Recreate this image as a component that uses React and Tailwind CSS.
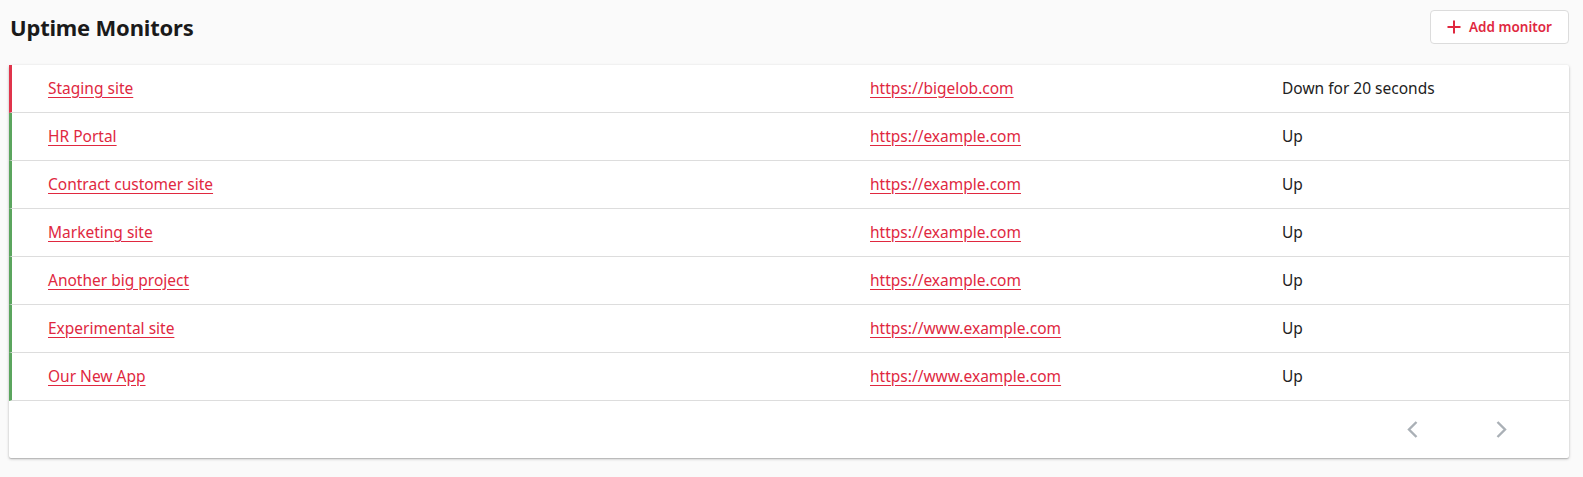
const monitors = [
  { name: "Staging site", url: "https://bigelob.com", status: "Down for 20 seconds", up: false },
  { name: "HR Portal", url: "https://example.com", status: "Up", up: true },
  { name: "Contract customer site", url: "https://example.com", status: "Up", up: true },
  { name: "Marketing site", url: "https://example.com", status: "Up", up: true },
  { name: "Another big project", url: "https://example.com", status: "Up", up: true },
  { name: "Experimental site", url: "https://www.example.com", status: "Up", up: true },
  { name: "Our New App", url: "https://www.example.com", status: "Up", up: true },
];

export default function App() {
  return (
    <div
      className="min-h-[477px] bg-[#fafafa] pl-[9px] pr-[14px] pt-[10px] text-[#1c1c1c]"
      style={{ fontFamily: '"Noto Sans", "Open Sans", sans-serif' }}
    >
      <div className="flex items-center justify-between h-[34px] mb-[21px]">
        <h1 className="pl-[1px] text-[22px] font-bold tracking-[-0.2px] text-[#1a1a1a]">
          Uptime Monitors
        </h1>
        <button className="flex items-center gap-[8px] h-[34px] w-[139px] justify-center rounded-[4px] border border-[#dcdcdc] bg-white text-[13.5px] font-semibold text-[#e0283f]">
          <svg width="14" height="14" viewBox="0 0 14 14" fill="none" stroke="currentColor" strokeWidth="2">
            <path d="M7 0.5v13M0.5 7h13" />
          </svg>
          Add monitor
        </button>
      </div>

      <div className="bg-white rounded-[2px] shadow-[0_1px_3px_rgba(0,0,0,0.25),0_1px_1px_rgba(0,0,0,0.12)]">
        {monitors.map((m) => (
          <div
            key={m.name}
            className={`grid grid-cols-[858px_412px_1fr] items-center h-[48px] border-b border-[#dddddd] border-l-[3px] ${
              m.up ? "border-l-[#5ba55e]" : "border-l-[#e0344b]"
            }`}
          >
            <a href="#" className="pl-[36px] text-[15.5px] text-[#e0283f] underline underline-offset-[3px]">
              {m.name}
            </a>
            <a href="#" className="text-[15.5px] text-[#e0283f] underline underline-offset-[3px] justify-self-start">
              {m.url}
            </a>
            <span className="text-[15.5px] text-[#222]">{m.status}</span>
          </div>
        ))}
        <div className="flex justify-end items-center h-[57px] pr-[62px] gap-[78px] text-[#aab0b6]">
          <svg width="11" height="17" viewBox="0 0 11 17" fill="none" stroke="currentColor" strokeWidth="2.4">
            <path d="M9.5 1L2 8.5L9.5 16" />
          </svg>
          <svg width="11" height="17" viewBox="0 0 11 17" fill="none" stroke="currentColor" strokeWidth="2.4">
            <path d="M1.5 1L9 8.5L1.5 16" />
          </svg>
        </div>
      </div>
    </div>
  );
}
